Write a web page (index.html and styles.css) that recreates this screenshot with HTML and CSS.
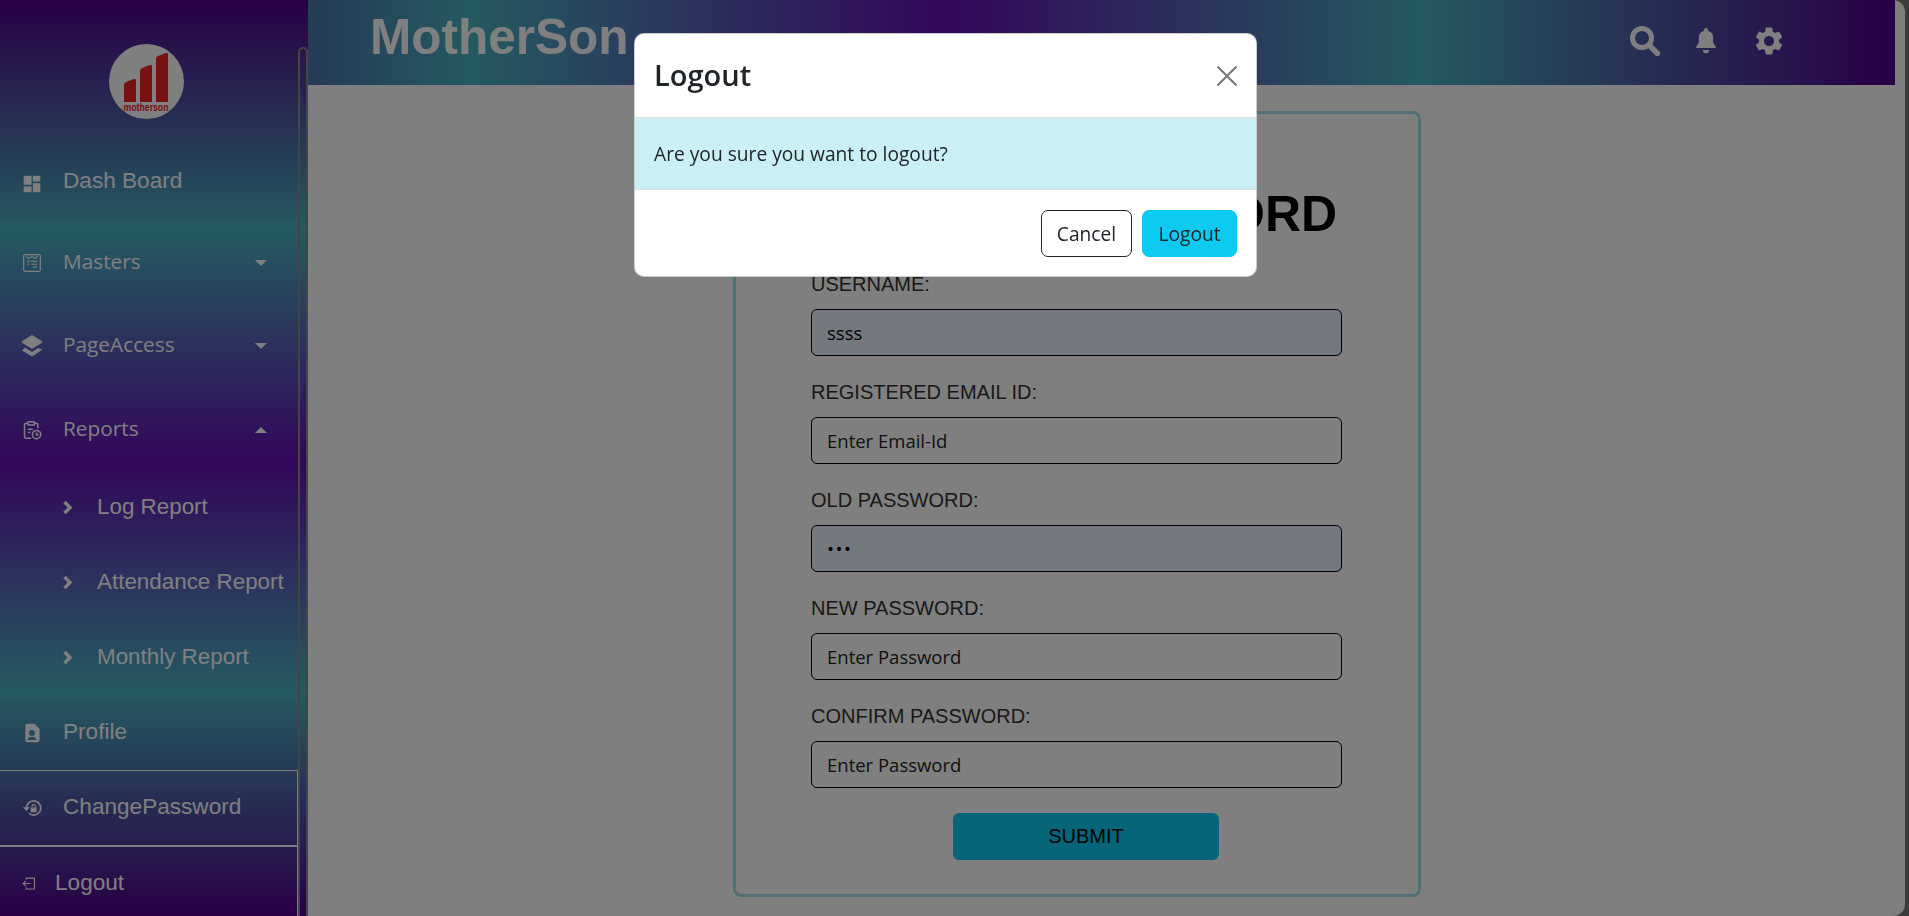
FILE: index.html
```html
<!DOCTYPE html>
<html lang="en">
<head>
    <meta charset="UTF-8">
    <meta name="viewport" content="width=device-width, initial-scale=1.0">
    <title>Change Password</title>
    <link rel="stylesheet" href="styles.css">
</head>
<body>
    <div class="app">
        <aside class="sidebar">
            <div class="side-col">
                <div class="logo-wrap">
                    <svg class="logo" viewBox="0 0 75 75">
                        <circle cx="37.5" cy="37.5" r="37.5" fill="#fff"/>
                        <path d="M15 41q0-2 2-3l8-3q2-.5 2 1v22H15z" fill="#ee2525"/>
                        <path d="M31 27q0-2 2-3l8-3q2-.5 2 1v36H31z" fill="#ee2525"/>
                        <path d="M47 15q0-2 2-3l8-3q2-.5 2 1v48H47z" fill="#ee2525"/>
                        <text x="37" y="67" text-anchor="middle" class="logo-text" textLength="45" lengthAdjust="spacingAndGlyphs">motherson</text>
                    </svg>
                </div>
                <nav class="nav">
                    <a class="nav-item">
                        <svg class="nav-icon dash" viewBox="0 0 24 24"><path d="M2 13h9.5V2H4a2 2 0 0 0-2 2zm0 9h9.5v-7H2zm11 0h9V11h-9zm0-20v7h9V2z" fill="currentColor"/></svg>
                        <span>Dash Board</span>
                    </a>
                    <a class="nav-item has-caret gap-a seg">
                        <svg class="nav-icon" viewBox="0 0 24 24" fill="none" stroke="currentColor" stroke-width="1.4"><rect x="2" y="2" width="20" height="20" rx="1.5"/><path d="M5 4l3 2.5L12 4l3.5 2.5L19 4M6 10h3M11 10h7M6 13.5h3M11 13.5h7M13 17h5"/></svg>
                        <span>Masters</span>
                        <i class="caret"></i>
                    </a>
                    <a class="nav-item has-caret gap-b seg">
                        <svg class="nav-icon layers" viewBox="0 0 24 24" fill="currentColor"><path d="M12 1l10.5 6.5-1 1.5L12 15 2.5 9 1.5 7.5z"/><path d="M5 13.5l7 4.5 6-4 4.5 1.5L13 22q-1 .6-2 0l-9-5.5z"/></svg>
                        <span>PageAccess</span>
                        <i class="caret"></i>
                    </a>
                    <a class="nav-item has-caret gap-c seg">
                        <svg class="nav-icon" viewBox="0 0 24 24" fill="none" stroke="currentColor" stroke-width="1.8"><path d="M7 4H5a2 2 0 0 0-2 2v14a2 2 0 0 0 2 2h6M15 4h2a2 2 0 0 1 2 2v4"/><rect x="7" y="2" width="8" height="4" rx="1"/><path d="M7 11h6M7 15h3"/><circle cx="17.5" cy="17.5" r="5"/><path d="M17.5 15v3h2.5"/></svg>
                        <span>Reports</span>
                        <i class="caret up"></i>
                    </a>
                    <a class="nav-item sub gap-d">
                        <svg class="chevron" viewBox="0 0 11 15"><path d="M2.500 2l5.500 5.500-5.500 5.500" fill="none" stroke="currentColor" stroke-width="3.500"/></svg>
                        <span>Log Report</span>
                    </a>
                    <a class="nav-item sub">
                        <svg class="chevron" viewBox="0 0 11 15"><path d="M2.500 2l5.500 5.500-5.500 5.500" fill="none" stroke="currentColor" stroke-width="3.500"/></svg>
                        <span>Attendance Report</span>
                    </a>
                    <a class="nav-item sub">
                        <svg class="chevron" viewBox="0 0 11 15"><path d="M2.500 2l5.500 5.500-5.500 5.500" fill="none" stroke="currentColor" stroke-width="3.500"/></svg>
                        <span>Monthly Report</span>
                    </a>
                    <a class="nav-item">
                        <svg class="nav-icon" viewBox="0 0 24 24"><path fill="currentColor" fill-rule="evenodd" d="M4 3a2 2 0 0 1 2-2h9l6 6v14a2 2 0 0 1-2 2H6a2 2 0 0 1-2-2zM12 8.500a3.500 3.500 0 1 0 0 7 3.500 3.500 0 0 0 0-7zM6.500 20.500h11c0-2.500-2.500-4-5.500-4s-5.500 1.500-5.500 4z"/></svg>
                        <span>Profile</span>
                    </a>
                    <a class="nav-item boxed">
                        <svg class="nav-icon" viewBox="0 0 24 24"><path d="M5.500 12a8.500 8.500 0 1 1 2.800 6.300" fill="none" stroke="currentColor" stroke-width="2"/><path d="M1 11h8.500l-4.200 4.600zM10.500 11.500h7v5.500h-7z" fill="currentColor"/><path d="M12 11.500V10a2 2 0 0 1 4 0v1.500" fill="none" stroke="currentColor" stroke-width="1.500"/></svg>
                        <span>ChangePassword</span>
                    </a>
                    <a class="nav-item boxed logout">
                        <svg class="logout-icon" viewBox="0 0 12 12" fill="none" stroke="currentColor"><path d="M4 2.500V1h7.500v10H4V9.500M8 6H1M3.500 3.500L1 6l2.500 2.500"/></svg>
                        <span>Logout</span>
                    </a>
                </nav>
            </div>
            <div class="side-scroll"></div>
        </aside>

        <div class="main">
            <header class="topbar">
                <div class="brand">MotherSon</div>
                <div class="top-icons">
                    <svg class="search-icon" viewBox="0 0 30 30"><circle cx="12" cy="12" r="9.500" fill="none" stroke="currentColor" stroke-width="5"/><path d="M19 19l8.500 8.500" stroke="currentColor" stroke-width="5.500" stroke-linecap="round"/></svg>
                    <svg class="bell-icon" viewBox="0 0 24 26"><path fill="currentColor" d="M12 0a2 2 0 0 1 2 2v.800c3.300.900 5.200 3.700 5.200 6.900v4c0 1.800 1.300 3.300 2.400 4.500.7.800.3 1.800-.8 1.800H3.200c-1.100 0-1.500-1-.8-1.800 1.100-1.200 2.400-2.700 2.400-4.500v-4c0-3.200 1.900-6 5.200-6.900V2a2 2 0 0 1 2-2zM8.800 22h6.400a3.200 3.200 0 0 1-6.400 0z"/></svg>
                    <svg class="gear-icon" viewBox="2 2 20 20"><path fill="currentColor" d="M19.140 12.940c.04-.3.06-.61.06-.94 0-.32-.02-.64-.07-.94l2.030-1.580c.18-.14.23-.41.12-.61l-1.920-3.320c-.12-.22-.37-.29-.59-.22l-2.390.96c-.5-.38-1.030-.7-1.620-.94l-.36-2.540c-.04-.24-.24-.41-.48-.41h-3.840c-.24 0-.43.17-.47.41l-.36 2.540c-.59.24-1.130.57-1.620.94l-2.390-.96c-.22-.08-.47 0-.59.22L2.740 8.870c-.12.21-.08.47.12.61l2.030 1.580c-.05.3-.09.63-.09.94s.02.64.07.94l-2.030 1.580c-.18.14-.23.41-.12.61l1.920 3.320c.12.22.37.29.59.22l2.390-.96c.5.38 1.030.7 1.620.94l.36 2.540c.05.24.24.41.48.41h3.840c.24 0 .44-.17.47-.41l.36-2.540c.59-.24 1.130-.56 1.620-.94l2.390.96c.22.08.47 0 .59-.22l1.920-3.320c.12-.22.07-.47-.12-.61l-2.010-1.580zM12 15.600c-1.980 0-3.600-1.620-3.600-3.600s1.620-3.600 3.600-3.600 3.600 1.620 3.600 3.600-1.620 3.600-3.600 3.600z"/></svg>
                </div>
            </header>

            <div class="content">
                <form class="card">
                    <h1 class="card-title">CHANGE PASSWORD</h1>
                    <div class="field">
                        <label for="username">USERNAME:</label>
                        <input id="username" class="filled" type="text" value="ssss">
                    </div>
                    <div class="field">
                        <label for="email">REGISTERED EMAIL ID:</label>
                        <input id="email" type="text" placeholder="Enter Email-Id">
                    </div>
                    <div class="field">
                        <label for="old-pass">OLD PASSWORD:</label>
                        <input id="old-pass" class="filled" type="password" value="abc">
                    </div>
                    <div class="field">
                        <label for="new-pass">NEW PASSWORD:</label>
                        <input id="new-pass" type="password" placeholder="Enter Password">
                    </div>
                    <div class="field">
                        <label for="confirm-pass">CONFIRM PASSWORD:</label>
                        <input id="confirm-pass" type="password" placeholder="Enter Password">
                    </div>
                    <button type="button" class="submit-btn">SUBMIT</button>
                </form>
            </div>
        </div>
    </div>

    <div class="backdrop">
        <div class="modal">
            <div class="modal-head">
                <h2>Logout</h2>
                <svg class="modal-close" viewBox="0 0 20 20"><path d="M.5.500l19 19M19.500.500l-19 19" stroke="currentColor" stroke-width="2" fill="none"/></svg>
            </div>
            <div class="modal-body">Are you sure you want to logout?</div>
            <div class="modal-foot">
                <button type="button" class="btn-cancel">Cancel</button>
                <button type="button" class="btn-logout">Logout</button>
            </div>
        </div>
    </div>
</body>
</html>
```

FILE: styles.css
```css
* {
    box-sizing: border-box;
}
html, body {
    height: 100%;
    margin: 0;
    overflow: hidden;
}
body {
    background-color: #787878;
    font-family: 'Liberation Sans', Arial, sans-serif;
}
.app {
    display: flex;
    width: 1905px;
    height: 916px;
    background: white;
    border-radius: 0 12px 12px 0;
    overflow: hidden;
}

/* sidebar */
.sidebar {
    display: flex;
    flex: 0 0 308px;
    height: 916px;
    overflow: hidden;
    color: white;
    background: linear-gradient(to bottom, #52008c 0, #48b4c0 230px, #660eb4 461px, #48b4c0 690px, #52008c 916px);
}
.side-col {
    width: 298px;
}
.side-scroll {
    width: 10px;
    height: 900px;
    margin-top: 47px;
    border: 2px solid #888;
    border-radius: 8px;
}
.logo-wrap {
    display: flex;
    justify-content: center;
    padding: 44px 0 25px 0;
    margin-left: -6px;
}
.logo {
    width: 75px;
    height: 75px;
}
.logo-text {
    font-family: 'Liberation Sans', sans-serif;
    font-size: 10px;
    font-weight: bold;
    fill: #ee2525;
}
.nav-item {
    display: flex;
    align-items: center;
    height: 75px;
    padding-left: 22px;
    font-size: 22.6px;
}
.nav-item span {
    margin-top: -2px;
}
.nav-item.seg {
    font-family: 'Open Sans', sans-serif;
    font-size: 20.8px;
}
.nav-item.seg span {
    margin-top: -4px;
}
.gap-a { margin-top: 6px; }
.gap-b { margin-top: 8px; }
.gap-c { margin-top: 9px; }
.gap-d { margin-top: 3px; }
.nav-icon {
    flex: 0 0 20px;
    width: 20px;
    height: 20px;
    margin-right: 21px;
}
.nav-icon.dash {
    margin-top: 4px;
}
.nav-icon.layers {
    flex-basis: 24px;
    width: 24px;
    height: 24px;
    margin: 0 19px 0 -2px;
}
.caret {
    margin-left: auto;
    margin-right: 31px;
    border-left: 6px solid transparent;
    border-right: 6px solid transparent;
    border-top: 6px solid white;
}
.caret.up {
    border-top: 0;
    border-bottom: 6px solid white;
}
.sub {
    padding-left: 62px;
    font-size: 22.4px;
}
.chevron {
    width: 11px;
    height: 15px;
    margin-right: 24px;
}
.boxed {
    border-top: 1px solid white;
    border-right: 1px solid white;
    width: 298px;
}
.logout {
    border-top-width: 2px;
}
.logout-icon {
    width: 13px;
    height: 13px;
    margin-right: 20px;
}

/* top bar */
.main {
    flex: 1;
    min-width: 0;
}
.topbar {
    display: flex;
    align-items: center;
    justify-content: space-between;
    height: 85px;
    margin-right: 10px;
    padding: 0 112px 0 62px;
    color: white;
    background: linear-gradient(to right, #52008c -312px, #48b4c0 163px, #660eb4 638px, #48b4c0 1113px, #52008c 1587px);
}
.brand {
    font-size: 49.5px;
    font-weight: bold;
    margin-top: -13px;
}
.top-icons {
    display: flex;
    align-items: center;
    margin-top: -3px;
}
.search-icon {
    width: 30px;
    height: 30px;
}
.bell-icon {
    width: 24px;
    height: 26px;
    margin-left: 34px;
}
.gear-icon {
    width: 28px;
    height: 28px;
    margin-left: 37px;
}

/* change password card */
.content {
    padding: 26px 0 0 425px;
}
.card {
    width: 688px;
    height: 786px;
    padding: 71px 76px 0 75px;
    border: 3px solid #9fe2e6;
    border-radius: 8px;
}
.card-title {
    margin: 0 0 30px 0;
    font-size: 50px;
    line-height: 58px;
    font-weight: bold;
    text-align: center;
    color: black;
    white-space: nowrap;
}
.field {
    margin-bottom: 25px;
}
.field label {
    display: block;
    margin-bottom: 14px;
    font-size: 20px;
    line-height: 22px;
    color: #333;
}
.field input {
    display: block;
    width: 100%;
    height: 47px;
    padding: 0 15px;
    border: 1px solid black;
    border-radius: 6px;
    background: white;
    font-family: 'Open Sans', sans-serif;
    font-size: 18.5px;
    color: black;
}
.field input.filled {
    background: #e8f0fe;
}
#old-pass {
    letter-spacing: 1.5px;
}
.field input::placeholder {
    color: #222;
    opacity: 1;
}
.submit-btn {
    display: block;
    width: 266px;
    height: 47px;
    margin: 0 0 0 142px;
    border: none;
    border-radius: 6px;
    background-color: #0dcaf0;
    font-family: 'Liberation Sans', sans-serif;
    font-size: 20px;
    color: black;
}

/* logout modal */
.backdrop {
    position: fixed;
    top: 0;
    left: 0;
    width: 100%;
    height: 100%;
    padding: 33px 0 0 634px;
    background: rgba(0, 0, 0, 0.5);
}
.modal {
    width: 623px;
    height: 244px;
    background: white;
    border: 1px solid rgba(0, 0, 0, 0.2);
    border-radius: 10px;
    font-family: 'Open Sans', sans-serif;
    color: #212529;
    overflow: hidden;
}
.modal-head {
    display: flex;
    align-items: center;
    justify-content: space-between;
    height: 84px;
    padding: 0 19px;
    border-bottom: 1px solid #dee2e6;
}
.modal-head h2 {
    margin: 0;
    font-size: 29px;
    font-weight: 600;
    line-height: 1.2;
}
.modal-close {
    width: 20px;
    height: 20px;
    color: #777;
}
.modal-body {
    display: flex;
    align-items: center;
    height: 72px;
    padding: 0 19px;
    background-color: #caf0f6;
    font-size: 19.2px;
    border-bottom: 1px solid #dee2e6;
}
.modal-foot {
    display: flex;
    justify-content: flex-end;
    gap: 10px;
    padding: 20px 19px 0 0;
}
.modal-foot button {
    height: 47px;
    border-radius: 7px;
    font-family: 'Open Sans', sans-serif;
    font-size: 19.2px;
    color: #212529;
}
.btn-cancel {
    width: 91px;
    background: white;
    border: 1px solid #212529;
}
.btn-logout {
    width: 95px;
    background: #0dcaf0;
    border: 1px solid #0dcaf0;
}
```
